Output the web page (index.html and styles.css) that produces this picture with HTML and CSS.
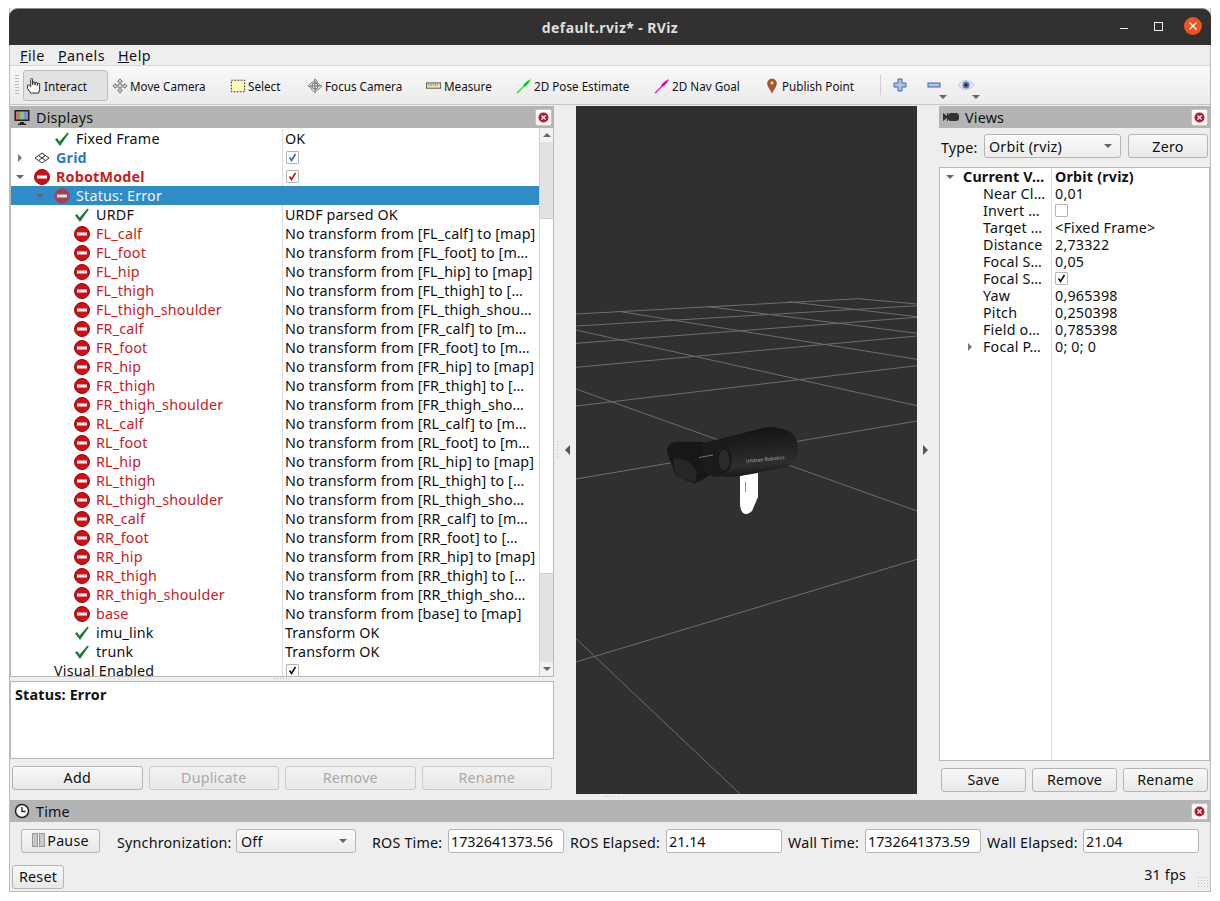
FILE: index.html
```html
<!DOCTYPE html>
<html lang="en">
<head>
  <meta charset="UTF-8">
  <link rel="stylesheet" href="styles.css">
  <title>default.rviz* - RViz</title>
</head>
<body>

<!-- shared icons -->
<svg class="defs" width="0" height="0">
  <symbol id="ok" viewBox="0 0 16 16"><path d="M1 8.5l2-1.500 2.600 3.500L13.500 1.500l1.300 1L6 15z" fill="#1f7a35"/></symbol>
  <symbol id="err" viewBox="0 0 16 16"><circle cx="8" cy="8" r="7.500" fill="#d40d12" stroke="#8e0b0e"/><rect x="3" y="6.500" width="10" height="3" fill="#fff"/></symbol>
  <symbol id="err-sel" viewBox="0 0 16 16"><circle cx="8" cy="8" r="7.500" fill="#ab3d52" stroke="#7d5c78"/><rect x="3" y="6.500" width="10" height="3" fill="#dfe3ea"/></symbol>
  <symbol id="grid" viewBox="0 0 16 16"><path d="M8 3l7 5-7 5-7-5zM4.500 5.500l7 5M11.500 5.500l-7 5" fill="none" stroke="#333" stroke-width="1"/></symbol>
  <symbol id="right" viewBox="0 0 8 8"><path d="M2 0l4 4-4 4z" fill="#777"/></symbol>
  <symbol id="down" viewBox="0 0 8 8"><path d="M0 2h8L4 6z" fill="#666"/></symbol>
  <symbol id="tick" viewBox="0 0 11 11"><path d="M2.500 5.500l2 3L8.500 2" fill="none" stroke="currentColor" stroke-width="1.600"/></symbol>
  <symbol id="closer" viewBox="0 0 17 17"><rect x=".5" y=".5" width="16" height="16" rx="2" fill="#fbfbfb" stroke="#c4c4c4"/><circle cx="8.500" cy="8.500" r="5" fill="#c8102e"/><path d="M6.500 6.500l4 4M10.500 6.500l-4 4" stroke="#fff" stroke-width="1.200"/></symbol>
</svg>

<div class="window">

  <div class="titlebar">
    <span class="title">default.rviz* - RViz</span>
    <div class="winbtns">
      <span class="w-min"></span>
      <span class="w-max"></span>
      <svg class="w-close" viewBox="0 0 18 18"><circle cx="9" cy="9" r="9" fill="#e95420"/><path d="M5.500 5.500l7 7M12.500 5.500l-7 7" stroke="#fff" stroke-width="1.200"/></svg>
    </div>
  </div>

  <div class="menubar">
    <span><u>F</u>ile</span>
    <span><u>P</u>anels</span>
    <span><u>H</u>elp</span>
  </div>

  <div class="toolbar">
    <span class="grip"></span>
    <div class="tool active t-interact">
      <svg class="tic" viewBox="1 1 15 17"><path d="M5 10V2.500a1 1 0 0 1 2 0V8l.5-2a1 1 0 0 1 2 0V8.500l.500-2a1 1 0 0 1 2 0V9l.500-1.500a1 1 0 0 1 2 0V13l-1 4H5l-3.500-5V9.500a1 1 0 0 1 2-.5z" fill="#fff" stroke="#222" stroke-width="1"/></svg>
      Interact
    </div>
    <div class="tool t-move">
      <svg class="tic" viewBox="0 0 18 18"><path d="M9 1l2.500 3H10v4h4V6.500L17 9l-3 2.500V10h-4v4h1.500L9 17l-2.500-3H8v-4H4v1.500L1 9l3-2.500V8h4V4H6.500z" fill="#eee" stroke="#666" stroke-width="1"/></svg>
      Move Camera
    </div>
    <div class="tool t-select">
      <svg class="tic" viewBox="0 0 18 18"><rect x="1.500" y="2.500" width="15" height="13" fill="#fdf6b5" stroke="#222" stroke-dasharray="2 1.500"/></svg>
      Select
    </div>
    <div class="tool t-focus">
      <svg class="tic" viewBox="0 0 18 18"><path d="M9 1l3 3.500h-1.500A4.500 4.500 0 0 1 13.500 7.500V7.500L17 9l-3.500 3.500A4.500 4.500 0 0 1 10.500 13.500L9 17l-3.500-3.500A4.500 4.500 0 0 1 4.500 10.500L1 9l3.500-3.500A4.500 4.500 0 0 1 7.500 4.500z" fill="#e6e6e6" stroke="#777"/><circle cx="9" cy="9" r="3.500" fill="none" stroke="#666"/><path d="M9 3v12M3 9h12" stroke="#666"/></svg>
      Focus Camera
    </div>
    <div class="tool t-measure">
      <svg class="tic" viewBox="0 0 18 18"><rect x=".5" y="5.500" width="16" height="6" fill="#e8e2a8" stroke="#555"/><path d="M3 6v2M5.500 6v3M8 6v2M10.500 6v3M13 6v2" stroke="#777"/></svg>
      Measure
    </div>
    <div class="tool t-pose">
      <svg class="tic" viewBox="0 0 18 18"><path d="M.5 16.500L8 9l1-2.500 4-3.500 4-2-2 4-3.500 4L9 10l-7 7.500z" fill="#20e82a"/><path d="M8.500 9.500L14 4" stroke="#17661d" stroke-width=".9"/></svg>
      2D Pose Estimate
    </div>
    <div class="tool t-nav">
      <svg class="tic" viewBox="0 0 18 18"><path d="M.5 16.500L8 9l1-2.500 4-3.500 4-2-2 4-3.500 4L9 10l-7 7.500z" fill="#f01bdc"/><path d="M8.500 9.500L14 4" stroke="#6d1065" stroke-width=".9"/></svg>
      2D Nav Goal
    </div>
    <div class="tool t-point">
      <svg class="tic" viewBox="0 0 14 18"><path d="M7 17C5 12 2 10 2 6a5 5 0 0 1 10 0c0 4-3 6-5 11z" fill="#a9542a" stroke="#7a3c1e" stroke-width=".6"/><circle cx="7" cy="5.500" r="1.800" fill="#f0c9a8"/></svg>
      Publish Point
    </div>
    <span class="tsep"></span>
    <svg class="tmini t-plus" viewBox="0 0 14 14"><path d="M5 1h4v4h4v4H9v4H5V9H1V5h4z" fill="#a9c4e8" stroke="#3a68ae"/></svg>
    <div class="tdrop t-minus">
      <svg class="tmini" viewBox="0 0 14 14"><rect x="1" y="5" width="12" height="4" fill="#a9c4e8" stroke="#3a68ae"/></svg>
      <svg class="tarrow"><use href="#down"/></svg>
    </div>
    <div class="tdrop t-eye">
      <svg class="tmini" viewBox="0 0 16 14"><path d="M0 7c4-6 12-6 16 0-4 6-12 6-16 0z" fill="#e6e6ee" stroke="#aaa" stroke-width=".6"/><circle cx="8" cy="7" r="3.500" fill="#5e74b8"/><circle cx="8" cy="7" r="1.500" fill="#1a1f3a"/></svg>
      <svg class="tarrow"><use href="#down"/></svg>
    </div>
  </div>

  <div class="main">

    <div class="left">
      <div class="dockhead">
        <svg class="dockic" viewBox="0 0 16 16"><rect x=".5" y="1" width="15" height="11" fill="#222"/><rect x="2" y="2.500" width="4" height="8" fill="#c77"/><rect x="6" y="2.500" width="4" height="8" fill="#7c7"/><rect x="10" y="2.500" width="4" height="8" fill="#88c"/><path d="M6 13h4v1.500h2V16H4v-1.500h2z" fill="#222"/></svg>
        <span>Displays</span>
        <svg class="closer"><use href="#closer"/></svg>
      </div>

      <div class="tree">
        <div class="rows">
          <div class="row"><div class="name lv1"><i class="arrow"></i><svg class="ic chk"><use href="#ok"/></svg>Fixed Frame</div><div class="val">OK</div></div>
          <div class="row"><div class="name lv0 blue"><svg class="arrow"><use href="#right"/></svg><svg class="ic"><use href="#grid"/></svg>Grid</div><div class="val"><span class="cb c-blue"><svg><use href="#tick"/></svg></span></div></div>
          <div class="row"><div class="name lv0 bad strong"><svg class="arrow"><use href="#down"/></svg><svg class="ic"><use href="#err"/></svg>RobotModel</div><div class="val"><span class="cb c-red"><svg><use href="#tick"/></svg></span></div></div>
          <div class="row sel"><div class="name lv1"><svg class="arrow"><use href="#down"/></svg><svg class="ic"><use href="#err-sel"/></svg>Status: Error</div><div class="val"></div></div>
          <div class="row"><div class="name lv2"><i class="arrow"></i><svg class="ic chk"><use href="#ok"/></svg>URDF</div><div class="val">URDF parsed OK</div></div>
          <div class="row"><div class="name lv2 bad"><i class="arrow"></i><svg class="ic"><use href="#err"/></svg>FL_calf</div><div class="val">No transform from [FL_calf] to [map]</div></div>
          <div class="row"><div class="name lv2 bad"><i class="arrow"></i><svg class="ic"><use href="#err"/></svg>FL_foot</div><div class="val">No transform from [FL_foot] to [m…</div></div>
          <div class="row"><div class="name lv2 bad"><i class="arrow"></i><svg class="ic"><use href="#err"/></svg>FL_hip</div><div class="val">No transform from [FL_hip] to [map]</div></div>
          <div class="row"><div class="name lv2 bad"><i class="arrow"></i><svg class="ic"><use href="#err"/></svg>FL_thigh</div><div class="val">No transform from [FL_thigh] to […</div></div>
          <div class="row"><div class="name lv2 bad"><i class="arrow"></i><svg class="ic"><use href="#err"/></svg>FL_thigh_shoulder</div><div class="val">No transform from [FL_thigh_shou…</div></div>
          <div class="row"><div class="name lv2 bad"><i class="arrow"></i><svg class="ic"><use href="#err"/></svg>FR_calf</div><div class="val">No transform from [FR_calf] to [m…</div></div>
          <div class="row"><div class="name lv2 bad"><i class="arrow"></i><svg class="ic"><use href="#err"/></svg>FR_foot</div><div class="val">No transform from [FR_foot] to [m…</div></div>
          <div class="row"><div class="name lv2 bad"><i class="arrow"></i><svg class="ic"><use href="#err"/></svg>FR_hip</div><div class="val">No transform from [FR_hip] to [map]</div></div>
          <div class="row"><div class="name lv2 bad"><i class="arrow"></i><svg class="ic"><use href="#err"/></svg>FR_thigh</div><div class="val">No transform from [FR_thigh] to […</div></div>
          <div class="row"><div class="name lv2 bad"><i class="arrow"></i><svg class="ic"><use href="#err"/></svg>FR_thigh_shoulder</div><div class="val">No transform from [FR_thigh_sho…</div></div>
          <div class="row"><div class="name lv2 bad"><i class="arrow"></i><svg class="ic"><use href="#err"/></svg>RL_calf</div><div class="val">No transform from [RL_calf] to [m…</div></div>
          <div class="row"><div class="name lv2 bad"><i class="arrow"></i><svg class="ic"><use href="#err"/></svg>RL_foot</div><div class="val">No transform from [RL_foot] to [m…</div></div>
          <div class="row"><div class="name lv2 bad"><i class="arrow"></i><svg class="ic"><use href="#err"/></svg>RL_hip</div><div class="val">No transform from [RL_hip] to [map]</div></div>
          <div class="row"><div class="name lv2 bad"><i class="arrow"></i><svg class="ic"><use href="#err"/></svg>RL_thigh</div><div class="val">No transform from [RL_thigh] to […</div></div>
          <div class="row"><div class="name lv2 bad"><i class="arrow"></i><svg class="ic"><use href="#err"/></svg>RL_thigh_shoulder</div><div class="val">No transform from [RL_thigh_sho…</div></div>
          <div class="row"><div class="name lv2 bad"><i class="arrow"></i><svg class="ic"><use href="#err"/></svg>RR_calf</div><div class="val">No transform from [RR_calf] to [m…</div></div>
          <div class="row"><div class="name lv2 bad"><i class="arrow"></i><svg class="ic"><use href="#err"/></svg>RR_foot</div><div class="val">No transform from [RR_foot] to […</div></div>
          <div class="row"><div class="name lv2 bad"><i class="arrow"></i><svg class="ic"><use href="#err"/></svg>RR_hip</div><div class="val">No transform from [RR_hip] to [map]</div></div>
          <div class="row"><div class="name lv2 bad"><i class="arrow"></i><svg class="ic"><use href="#err"/></svg>RR_thigh</div><div class="val">No transform from [RR_thigh] to […</div></div>
          <div class="row"><div class="name lv2 bad"><i class="arrow"></i><svg class="ic"><use href="#err"/></svg>RR_thigh_shoulder</div><div class="val">No transform from [RR_thigh_sho…</div></div>
          <div class="row"><div class="name lv2 bad"><i class="arrow"></i><svg class="ic"><use href="#err"/></svg>base</div><div class="val">No transform from [base] to [map]</div></div>
          <div class="row"><div class="name lv2"><i class="arrow"></i><svg class="ic chk"><use href="#ok"/></svg>imu_link</div><div class="val">Transform OK</div></div>
          <div class="row"><div class="name lv2"><i class="arrow"></i><svg class="ic chk"><use href="#ok"/></svg>trunk</div><div class="val">Transform OK</div></div>
          <div class="row last"><div class="name lv1 noicon"><i class="arrow"></i>Visual Enabled</div><div class="val"><span class="cb"><svg><use href="#tick"/></svg></span></div></div>
        </div>
        <div class="scrollbar">
          <div class="sb-btn"><svg class="sb-up"><use href="#down"/></svg></div>
          <div class="sb-trough t1"></div>
          <div class="sb-thumb"></div>
          <div class="sb-trough t2"></div>
          <div class="sb-btn"><svg><use href="#down"/></svg></div>
        </div>
      </div>

      <div class="hsplit"></div>
      <div class="desc"><b>Status: Error</b></div>

      <div class="btnrow">
        <button class="btn">Add</button>
        <button class="btn off">Duplicate</button>
        <button class="btn off">Remove</button>
        <button class="btn off">Rename</button>
      </div>
    </div>

    <div class="vsplit ls"><svg class="sp-arrow" viewBox="0 0 6 10"><path d="M5 0v10L0 5z" fill="#555"/></svg></div>

    <div class="center">
      <svg class="viewport" viewBox="576 106 341 688">
        <defs>
          <linearGradient id="body" x1="0" y1="0" x2="0.150" y2="1">
            <stop offset="0" stop-color="#101010"/>
            <stop offset=".4" stop-color="#1e1e1e"/>
            <stop offset=".82" stop-color="#2e2e2e"/>
            <stop offset="1" stop-color="#1a1a1a"/>
          </linearGradient>
        </defs>
        <rect x="576" y="106" width="341" height="688" fill="#303030"/>
        <g class="gridlines">
          <path d="M576 314L858 298.700L917 304"/>
          <path d="M576 326L917 305.700"/>
          <path d="M576 343.300L917 317.300"/>
          <path d="M576 367.300L917 336"/>
          <path d="M576 406L917 365.700"/>
          <path d="M576 479L917 421"/>
          <path d="M576 662L917 559.300"/>
          <path d="M618.300 311.300L917 359.300"/>
          <path d="M708.300 306.700L917 333.300"/>
          <path d="M788.300 301.700L917 316.700"/>
          <path d="M576 330L917 405.700"/>
          <path d="M576 389L917 511"/>
          <path d="M576 638.700L740 794"/>
        </g>
        <!-- robot -->
        <path d="M740 476L758 473V497L752 511Q747 516 743 513Q740 510 740 503z" fill="#fff"/>
        <path d="M745.500 482v10" stroke="#888"/>
        <path d="M667 449Q669 442 678 441.700L704 442V470L730 477L712 474L700 481L695 483.500Q684 480 675 475L672 465Q667 455 667 449z" fill="#171717"/>
        <path d="M673 458Q690 458 697 472L695 482Q684 480 675 475z" fill="#262626"/>
        <path d="M703 443L767 427Q785 427 794 435Q798 440 798 452Q797 462 787 467L733 477Q722 478 712 470Q704 462 703 450z" fill="url(#body)"/>
        <ellipse cx="717" cy="459" rx="15" ry="18" fill="#1b1b1b"/>
        <ellipse cx="724" cy="460" rx="6" ry="11" fill="#2b2b2b" stroke="#141414"/>
        <path d="M699 457.500L713 455" stroke="#777"/>
        <text class="logo" x="746" y="463" transform="rotate(-6 746 463)">Unitree Robotics</text>
      </svg>
      <div class="vgrip"></div>
    </div>

    <div class="vsplit rs"><svg class="sp-arrow" viewBox="0 0 6 10"><path d="M1 0v10l5-5z" fill="#555"/></svg></div>

    <div class="right">
      <div class="dockhead">
        <svg class="dockic cam" viewBox="0 0 16 10"><path d="M0 1l4 3V1h1v8H4V6L0 9z" fill="#333"/><rect x="5" y="1" width="11" height="8" rx="3" fill="#333"/></svg>
        <span>Views</span>
        <svg class="closer"><use href="#closer"/></svg>
      </div>
      <div class="typerow">
        <span class="typelab">Type:</span>
        <div class="combo c-type"><span>Orbit (rviz)</span><svg class="carrow"><use href="#down"/></svg></div>
        <button class="btn b-zero">Zero</button>
      </div>
      <div class="tree2">
        <div class="r2"><div class="n2 strong"><svg class="a2"><use href="#down"/></svg>Current V…</div><div class="v2 strong">Orbit (rviz)</div></div>
        <div class="r2"><div class="n2 sub">Near Cl…</div><div class="v2">0,01</div></div>
        <div class="r2"><div class="n2 sub">Invert …</div><div class="v2"><span class="cb"></span></div></div>
        <div class="r2"><div class="n2 sub">Target …</div><div class="v2">&lt;Fixed Frame&gt;</div></div>
        <div class="r2"><div class="n2 sub">Distance</div><div class="v2">2,73322</div></div>
        <div class="r2"><div class="n2 sub">Focal S…</div><div class="v2">0,05</div></div>
        <div class="r2"><div class="n2 sub">Focal S…</div><div class="v2"><span class="cb"><svg><use href="#tick"/></svg></span></div></div>
        <div class="r2"><div class="n2 sub">Yaw</div><div class="v2">0,965398</div></div>
        <div class="r2"><div class="n2 sub">Pitch</div><div class="v2">0,250398</div></div>
        <div class="r2"><div class="n2 sub">Field o…</div><div class="v2">0,785398</div></div>
        <div class="r2"><div class="n2 sub arrowed"><svg class="a2"><use href="#right"/></svg>Focal P…</div><div class="v2">0; 0; 0</div></div>
        <div class="r2 fill"><div class="n2"></div><div class="v2"></div></div>
      </div>
      <div class="btnrow b2">
        <button class="btn">Save</button>
        <button class="btn">Remove</button>
        <button class="btn">Rename</button>
      </div>
    </div>
  </div>

  <div class="timepanel">
    <div class="dockhead">
      <svg class="dockic" viewBox="0 0 16 16"><circle cx="8" cy="8" r="6.500" fill="#fff" stroke="#222" stroke-width="1.500"/><path d="M8 4v4.500h3.500" fill="none" stroke="#222" stroke-width="1.300"/></svg>
      <span>Time</span>
      <svg class="closer"><use href="#closer"/></svg>
    </div>
    <div class="timerow">
      <button class="btn b-pause"><span class="pausebars"><i></i><i></i></span>Pause</button>
      <span class="lab l-sync">Synchronization:</span>
      <div class="combo c-sync"><span>Off</span><svg class="carrow"><use href="#down"/></svg></div>
      <span class="lab l-rt">ROS Time:</span>
      <div class="field">1732641373.56</div>
      <span class="lab l-re">ROS Elapsed:</span>
      <div class="field">21.14</div>
      <span class="lab l-wt">Wall Time:</span>
      <div class="field">1732641373.59</div>
      <span class="lab l-we">Wall Elapsed:</span>
      <div class="field">21.04</div>
    </div>
    <div class="statusrow">
      <button class="btn b-reset">Reset</button>
      <span class="fps">31 fps</span>
      <span class="sizegrip"></span>
    </div>
  </div>

</div>
</body>
</html>
```

FILE: styles.css
```css
html, body {
  margin: 0;
  padding: 0;
  background: #fff;
}

body {
  font-family: "Noto Sans", "Open Sans", sans-serif;
  font-size: 14.3px;
  letter-spacing: .2px;
  color: #111;
  height: 901px;
  overflow: hidden;
}

.defs {
  position: absolute;
}

.window {
  width: 1200px;
  height: 883px;
  margin: 8px 0 0 9px;
  background: #eee;
  border: solid #bdbdbd;
  border-width: 0 1px 1px 1px;
  display: flex;
  flex-direction: column;
}

/* title bar */
.titlebar {
  height: 37px;
  margin: 0 -1px;
  background: #323030;
  border-radius: 9px 9px 0 0;
  border-top: 1px solid #888;
  box-sizing: border-box;
  display: flex;
  align-items: center;
  justify-content: center;
  position: relative;
  flex: none;
}

.title {
  color: #dfdfdf;
  font-weight: 700;
  font-size: 14px;
  letter-spacing: .4px;
}

.winbtns {
  position: absolute;
  right: 9px;
  top: 8px;
  display: flex;
  align-items: center;
  height: 18px;
}

.w-min {
  width: 8px;
  height: 0;
  border-top: 1px solid #eee;
  margin: 5px 26px 0 0;
}

.w-max {
  width: 7px;
  height: 7px;
  border: 1px solid #eee;
  margin-right: 21px;
}

.w-close {
  width: 18px;
  height: 18px;
}

/* menu */
.menubar {
  height: 21px;
  flex: none;
  display: flex;
  align-items: center;
  gap: 13px;
  padding-left: 10px;
  background: #eee;
  border-bottom: 1px solid #d8d8d8;
  box-sizing: border-box;
  letter-spacing: .5px;
}

/* toolbar */
.toolbar {
  height: 39px;
  flex: none;
  box-sizing: border-box;
  display: flex;
  align-items: center;
  padding-left: 5px;
  background: linear-gradient(#f8f8f8, #ebebeb);
  border-bottom: 1px solid #c6c6c6;
  font-size: 11.7px;
  letter-spacing: 0;
  margin-bottom: 1px;
}

.grip {
  width: 4px;
  height: 22px;
  margin-right: 4px;
  background: radial-gradient(#bbb 40%, transparent 45%) 0 0 / 2px 3px;
}

.tool {
  display: flex;
  align-items: center;
  gap: 2px;
  height: 31px;
  padding: 1px 0 0 4px;
  box-sizing: border-box;
  white-space: nowrap;
}

.tool.active {
  background: #e2e2e2;
  border: 1px solid #bcbcbc;
  border-radius: 3px;
  padding-left: 2px;
}

.tic {
  width: 16px;
  height: 16px;
  flex: none;
}

.t-interact { width: 85px; }
.t-move { width: 118px; }
.t-select { width: 77px; }
.t-focus { width: 119px; }
.t-measure { width: 90px; }
.t-pose { width: 138px; }
.t-nav { width: 113px; }
.t-point { width: 117px; padding-left: 1px; }

.tsep {
  width: 1px;
  height: 20px;
  background: #cfcfcf;
  margin-right: 12px;
}

.tmini {
  width: 14px;
  height: 14px;
  flex: none;
  display: block;
}

.t-plus {
  margin-right: 20px;
}

.tdrop {
  position: relative;
  width: 33px;
}

.t-eye .tmini {
  width: 16px;
  margin-left: -2px;
}

.tarrow {
  position: absolute;
  left: 12px;
  top: 15px;
  width: 8px;
  height: 8px;
}

/* main dock area */
.main {
  height: 694px;
  flex: none;
  display: flex;
}

.left {
  width: 544px;
  flex: none;
  display: flex;
  flex-direction: column;
}

.dockhead {
  height: 22px;
  flex: none;
  background: #b4b4b4;
  display: flex;
  align-items: center;
  position: relative;
}

.dockic {
  width: 16px;
  height: 16px;
  margin: 0 6px 0 4px;
}

.dockic.cam {
  height: 10px;
}

.closer {
  position: absolute;
  right: 2px;
  top: 3px;
  width: 17px;
  height: 17px;
}

/* displays tree */
.tree {
  height: 549px;
  flex: none;
  display: flex;
  background: #fff;
  border: 1px solid #b8b8b8;
  border-top: 0;
  box-sizing: border-box;
}

.rows {
  flex: 1;
  overflow: hidden;
  min-width: 0;
  padding-top: 1px;
}

.row {
  height: 19px;
  display: flex;
  line-height: 19px;
}

.name {
  width: 272px;
  flex: none;
  box-sizing: border-box;
  border-right: 1px solid #ddd;
  display: flex;
  align-items: center;
  white-space: nowrap;
  overflow: hidden;
}

.val {
  flex: 1;
  padding-left: 2px;
  white-space: nowrap;
  min-width: 0;
  display: flex;
  align-items: center;
  letter-spacing: .12px;
}

.lv0 { padding-left: 5px; }
.lv1 { padding-left: 25px; }
.lv2 { padding-left: 45px; }

.arrow {
  width: 8px;
  height: 8px;
  margin-right: 10px;
  flex: none;
  display: block;
}

.ic {
  width: 16px;
  height: 16px;
  margin-right: 6px;
  flex: none;
}

.noicon {
  padding-left: 25px;
}

.bad { color: #c8201f; }
.blue { color: #2f7ac6; font-weight: 700; }
.strong { font-weight: 700; }

.row.sel {
  background: #308cc6;
  color: #eef4f8;
}

.row.sel .name {
  border-right-color: #308cc6;
}

.cb {
  display: inline-block;
  box-sizing: border-box;
  width: 13px;
  height: 13px;
  margin-left: 1px;
  background: #fff;
  border: 1px solid #b5b5b5;
  border-radius: 1px;
  color: #111;
}

.cb svg {
  display: block;
  width: 11px;
  height: 11px;
}

.c-blue { color: #2f6fb4; }
.c-red { color: #b4161b; }

/* scrollbar */
.scrollbar {
  width: 14px;
  flex: none;
  display: flex;
  flex-direction: column;
  background: #fff;
  border-left: 1px solid #d0d0d0;
  box-sizing: border-box;
}

.sb-btn {
  height: 14px;
  background: #f2f2f2;
  display: flex;
  align-items: center;
  justify-content: center;
  flex: none;
}

.sb-btn svg {
  width: 8px;
  height: 8px;
}

.sb-up {
  transform: rotate(180deg);
}

.sb-trough {
  background: #e2e2e2;
  flex: none;
}

.t1 { height: 76px; }
.t2 { height: 88px; }

.sb-thumb {
  flex: 1;
  background: #fff;
  border: solid #cfcfcf;
  border-width: 1px 0;
}

.hsplit {
  height: 4px;
  flex: none;
  background: repeating-linear-gradient(90deg, #bdbdbd 0 1px, transparent 1px 3px) center 1px / 17px 1px no-repeat;
}

.desc {
  height: 78px;
  flex: none;
  box-sizing: border-box;
  background: #fff;
  border: 1px solid #b8b8b8;
  padding: 3px 4px;
}

/* buttons */
.btnrow {
  display: flex;
  gap: 6px;
  padding: 7px 2px 0;
}

.btn {
  height: 24px;
  flex: 1;
  padding: 0 0 2px;
  font: inherit;
  letter-spacing: inherit;
  color: #111;
  background: linear-gradient(#f8f8f8, #e8e8e8);
  border: 1px solid #b5b5b5;
  border-radius: 3px;
  box-sizing: border-box;
}

.btn.off {
  color: #a9a9a9;
  border-color: #cacaca;
  background: linear-gradient(#f2f2f2, #e9e9e9);
}

.vsplit {
  width: 22px;
  flex: none;
  display: flex;
  align-items: center;
  justify-content: center;
  padding-bottom: 7px;
  box-sizing: border-box;
}

.vsplit.ls {
  padding-left: 6px;
  background: repeating-linear-gradient(#bdbdbd 0 1px, transparent 1px 3px) 3px 335px / 1px 17px no-repeat;
}

.vsplit.rs {
  padding-right: 6px;
}

.sp-arrow {
  width: 6px;
  height: 10px;
}

.center {
  width: 341px;
  flex: none;
}

.viewport {
  width: 341px;
  height: 688px;
  display: block;
}

.vgrip {
  width: 17px;
  height: 1px;
  margin: 2px 0 0 27px;
  background: repeating-linear-gradient(90deg, #bdbdbd 0 1px, transparent 1px 3px);
}

.gridlines path {
  fill: none;
  stroke: #6e6e6e;
  stroke-width: 1;
}

.logo {
  font-size: 5px;
  fill: #b0b0b0;
  letter-spacing: 0;
}

/* views panel */
.right {
  flex: 1;
  min-width: 0;
  display: flex;
  flex-direction: column;
}

.typerow {
  display: flex;
  align-items: center;
  height: 24px;
  margin: 6px 0 9px;
  padding-left: 2px;
  flex: none;
}

.typelab {
  width: 43px;
  flex: none;
  padding-top: 2px;
}

.combo {
  height: 24px;
  box-sizing: border-box;
  background: linear-gradient(#fafafa, #ececec);
  border: 1px solid #b5b5b5;
  border-radius: 3px;
  display: flex;
  align-items: center;
  justify-content: space-between;
  padding: 0 8px 0 4px;
  flex: none;
}

.carrow {
  width: 8px;
  height: 8px;
}

.c-type { width: 137px; margin-right: 7px; }

.btn.b-zero {
  flex: none;
  width: 80px;
  padding-bottom: 0;
}

.tree2 {
  height: 594px;
  flex: none;
  box-sizing: border-box;
  background: #fff;
  border: 1px solid #b8b8b8;
  display: flex;
  flex-direction: column;
}

.r2 {
  height: 17px;
  flex: none;
  display: flex;
  line-height: 17px;
}

.r2.fill {
  flex: 1;
}

.n2 {
  width: 112px;
  flex: none;
  border-right: 1px solid #ddd;
  white-space: nowrap;
  overflow: hidden;
  display: flex;
  align-items: center;
  padding-left: 6px;
  box-sizing: border-box;
}

.a2 {
  width: 8px;
  height: 8px;
  margin-right: 9px;
  flex: none;
}

.n2.sub {
  padding-left: 43px;
}

.n2.arrowed {
  padding-left: 26px;
}

.v2 {
  padding-left: 3px;
  white-space: nowrap;
  display: flex;
  align-items: center;
}

.v2 .cb {
  margin-left: 0;
}

.b2 {
  padding-top: 7px;
}

/* time panel */
.timepanel {
  flex: 1;
  min-height: 0;
}

.timerow {
  display: flex;
  align-items: center;
  height: 24px;
  margin-top: 7px;
  padding-left: 11px;
}

.btn.b-pause {
  flex: none;
  width: 79px;
  display: flex;
  align-items: center;
  justify-content: center;
  gap: 2px;
  margin-right: 17px;
}

.pausebars {
  display: flex;
  gap: 1px;
}

.pausebars i {
  display: block;
  width: 6px;
  height: 14px;
  background: #c9c9c9;
  border: 1px solid #999;
  box-sizing: border-box;
}

.lab {
  flex: none;
  white-space: nowrap;
  padding-top: 2px;
}

.l-sync { width: 119px; }
.c-sync { width: 120px; margin-right: 16px; }
.l-rt { width: 76px; }
.l-re { width: 96px; }
.l-wt { width: 77px; }
.l-we { width: 96px; }

.field {
  width: 116px;
  height: 24px;
  flex: none;
  box-sizing: border-box;
  background: #fff;
  border: 1px solid #b5b5b5;
  border-radius: 3px;
  padding: 1px 0 0 2px;
  margin-right: 6px;
  line-height: 22px;
  letter-spacing: 0;
  white-space: nowrap;
  overflow: hidden;
}

.statusrow {
  display: flex;
  align-items: center;
  height: 24px;
  margin-top: 12px;
  padding-left: 2px;
  position: relative;
}

.btn.b-reset {
  flex: none;
  width: 52px;
}

.fps {
  margin-left: auto;
  margin-right: 24px;
  padding-bottom: 6px;
}

.sizegrip {
  position: absolute;
  right: 1px;
  bottom: 1px;
  width: 12px;
  height: 12px;
  background: radial-gradient(#c2c2c2 40%, transparent 45%) 0 0 / 3px 3px;
}
```
